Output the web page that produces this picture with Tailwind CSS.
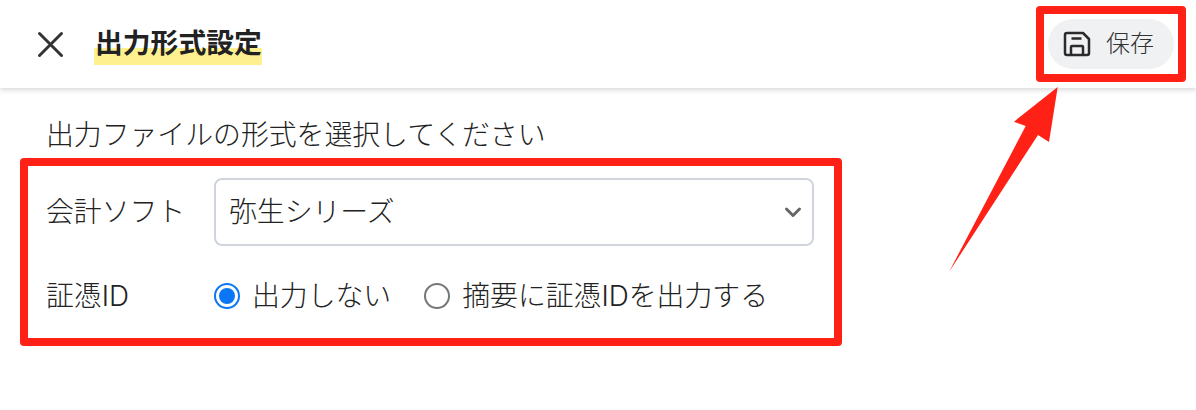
<!DOCTYPE html>
<html lang="ja">

<head>
    <meta charset="UTF-8">
    <title>出力形式設定</title>
    <script src="https://cdn.jsdelivr.net/npm/@tailwindcss/browser@4"></script>
</head>

<body class="bg-white">
    <div class="relative w-[1196px] h-[410px] overflow-hidden bg-white text-[#222] font-['Inter','Noto_Sans_CJK_JP',sans-serif] font-light">

        <!-- header -->
        <header class="flex items-center h-[88px] pl-[36px] pr-[22px] bg-white shadow-[0_2px_5px_rgba(0,0,0,0.16)]">
            <svg class="w-[28px] h-[28px]" viewBox="0 0 28 28" fill="none" stroke="#333" stroke-width="3" stroke-linecap="round">
                <path d="M3.5 3.5L25.5 25.5M25.5 3.5L3.5 25.5" />
            </svg>
            <h1 class="ml-[30px] pr-[1px] text-[27.8px] leading-[40px] font-bold text-[#222] bg-[linear-gradient(transparent_60%,#fff08f_60%)] h-[42px]">
                <span class="block pl-[1px] -mr-[1px]">出力形式設定</span>
            </h1>
            <button class="ml-auto flex items-center w-[126px] h-[50px] pl-[15px] rounded-full bg-[#f0f1f3]">
                <svg class="w-[28px] h-[28px]" viewBox="0 0 28 28" fill="none" stroke="#2b2b2b" stroke-width="2.5" stroke-linejoin="round">
                    <path d="M2 5a2 2 0 0 1 2-2h16l6 6v14a2 2 0 0 1-2 2H4a2 2 0 0 1-2-2z" />
                    <path d="M8 25v-8a1 1 0 0 1 1-1h10a1 1 0 0 1 1 1v8M8.5 8.5h10" />
                </svg>
                <span class="ml-[15px] text-[24px] leading-none text-[#333]">保存</span>
            </button>
        </header>

        <main class="pl-[46px] pt-[27px]">
            <p class="text-[27.85px] leading-[40px]">出力ファイルの形式を選択してください</p>

            <div class="flex items-center mt-[23px]">
                <span class="w-[168px] text-[27.85px] leading-[40px]">会計ソフト</span>
                <div class="flex items-center justify-between w-[600px] h-[68px] pl-[13px] pr-[10px] border-2 border-[#d0d5dd] rounded-[8px]">
                    <span class="text-[27.85px] leading-[40px]">弥生シリーズ</span>
                    <svg class="w-[18px] h-[12px]" viewBox="0 0 18 12" fill="none" stroke="#666" stroke-width="3" stroke-linecap="round" stroke-linejoin="round">
                        <path d="M2.5 3l6.5 6.5 6.5-6.5" />
                    </svg>
                </div>
            </div>

            <div class="flex items-center mt-[30px]">
                <span class="w-[168px] text-[27.85px] leading-[40px]">証憑ID</span>
                <label class="flex items-center">
                    <span class="flex items-center justify-center w-[26px] h-[26px] rounded-full border-2 border-[#0b76f5]">
                        <span class="w-[16px] h-[16px] rounded-full bg-[#0b76f5]"></span>
                    </span>
                    <span class="ml-[12px] text-[27.85px] leading-[40px]">出力しない</span>
                </label>
                <label class="flex items-center ml-[33px]">
                    <span class="w-[26px] h-[26px] rounded-full border-2 border-[#767676]"></span>
                    <span class="ml-[12px] text-[27.85px] leading-[40px]">摘要に証憑IDを出力する</span>
                </label>
            </div>
        </main>

        <!-- annotations -->
        <div class="absolute left-[1036px] top-[6px] w-[150px] h-[76px] border-[8px] border-[#ff2116] rounded-[4px]"></div>
        <div class="absolute left-[20px] top-[158px] w-[822px] h-[188px] border-[8px] border-[#ff2116] rounded-[4px]"></div>
        <svg class="absolute left-0 top-0 w-[1196px] h-[410px] pointer-events-none" viewBox="0 0 1196 410">
            <polygon points="1057.7,87 1014,121.7 1025.7,126 949,272 1038,135 1049,142" fill="#ff2116" />
        </svg>
    </div>
</body>

</html>
